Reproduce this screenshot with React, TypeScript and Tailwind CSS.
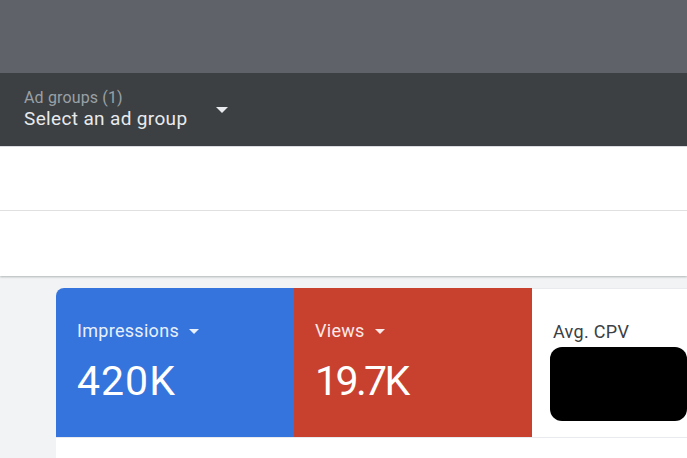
import React from "react";

const Caret = ({ color, w = 12, h = 6 }: { color: string; w?: number; h?: number }) => (
  <svg width={w} height={h} viewBox={`0 0 ${w} ${h}`} className="block">
    <path d={`M0 0 L${w} 0 L${w / 2} ${h} Z`} fill={color} />
  </svg>
);

export default function App() {
  return (
    <div
      className="w-[687px] h-[458px] overflow-hidden flex flex-col bg-[#f1f3f4]"
      style={{ fontFamily: "Roboto, 'Liberation Sans', sans-serif" }}
    >
      <div className="h-[73px] shrink-0 bg-[#5f6369]" />
      <div className="h-[73px] shrink-0 bg-[#3c4043] flex items-center px-6">
        <div className="w-[192px] flex flex-col pt-[1px]">
          <span className="text-[16px] leading-[18px] tracking-[0.15px] text-[#9aa0a6]">Ad groups (1)</span>
          <span className="text-[19px] leading-[24px] tracking-[0.35px] text-[#e8eaed]">Select an ad group</span>
        </div>
        <Caret color="#e8eaed" />
      </div>
      <div className="h-[130px] shrink-0 bg-white flex flex-col border-t border-[#dadce0] shadow-[0_1px_2px_rgba(60,64,67,0.35)] relative z-10">
        <div className="h-[64px] border-b border-[#e0e0e0]" />
        <div className="flex-1" />
      </div>
      <div className="flex-1 pt-[12px] pl-[56px]">
        <div className="h-full rounded-tl-[8px] overflow-hidden bg-white flex flex-col">
          <div className="h-[149px] flex shrink-0">
            <div className="w-[238px] bg-[#3574dc] pt-[31px] pl-[21px] text-white">
              <div className="flex items-center gap-[10px] text-[18px] leading-[24px] tracking-[0.3px] text-[#e8f0fe]">
                <span>Impressions</span>
                <Caret color="#e8f0fe" w={10} h={5} />
              </div>
              <div className="mt-[18px] text-[41px] leading-[40px] tracking-[1px]">420K</div>
            </div>
            <div className="w-[238px] bg-[#c8412f] pt-[31px] pl-[21px] text-white">
              <div className="flex items-center gap-[10px] text-[18px] leading-[24px] tracking-[0.3px] text-[#fce8e6]">
                <span>Views</span>
                <Caret color="#fce8e6" w={10} h={5} />
              </div>
              <div className="mt-[18px] text-[41px] leading-[40px] tracking-[-2.6px]">19.7K</div>
            </div>
            <div className="flex-1 bg-white pt-[31px] pl-[21px] border-t border-[#e8eaed]">
              <div className="text-[18px] leading-[24px] tracking-[0.3px] text-[#3c4043]">Avg. CPV</div>
              <div className="mt-[3px] -ml-[3px] w-[137px] h-[74px] rounded-[12px] bg-black" />
            </div>
          </div>
          <div className="flex-1 bg-white border-t border-[#e8eaed]" />
        </div>
      </div>
    </div>
  );
}
